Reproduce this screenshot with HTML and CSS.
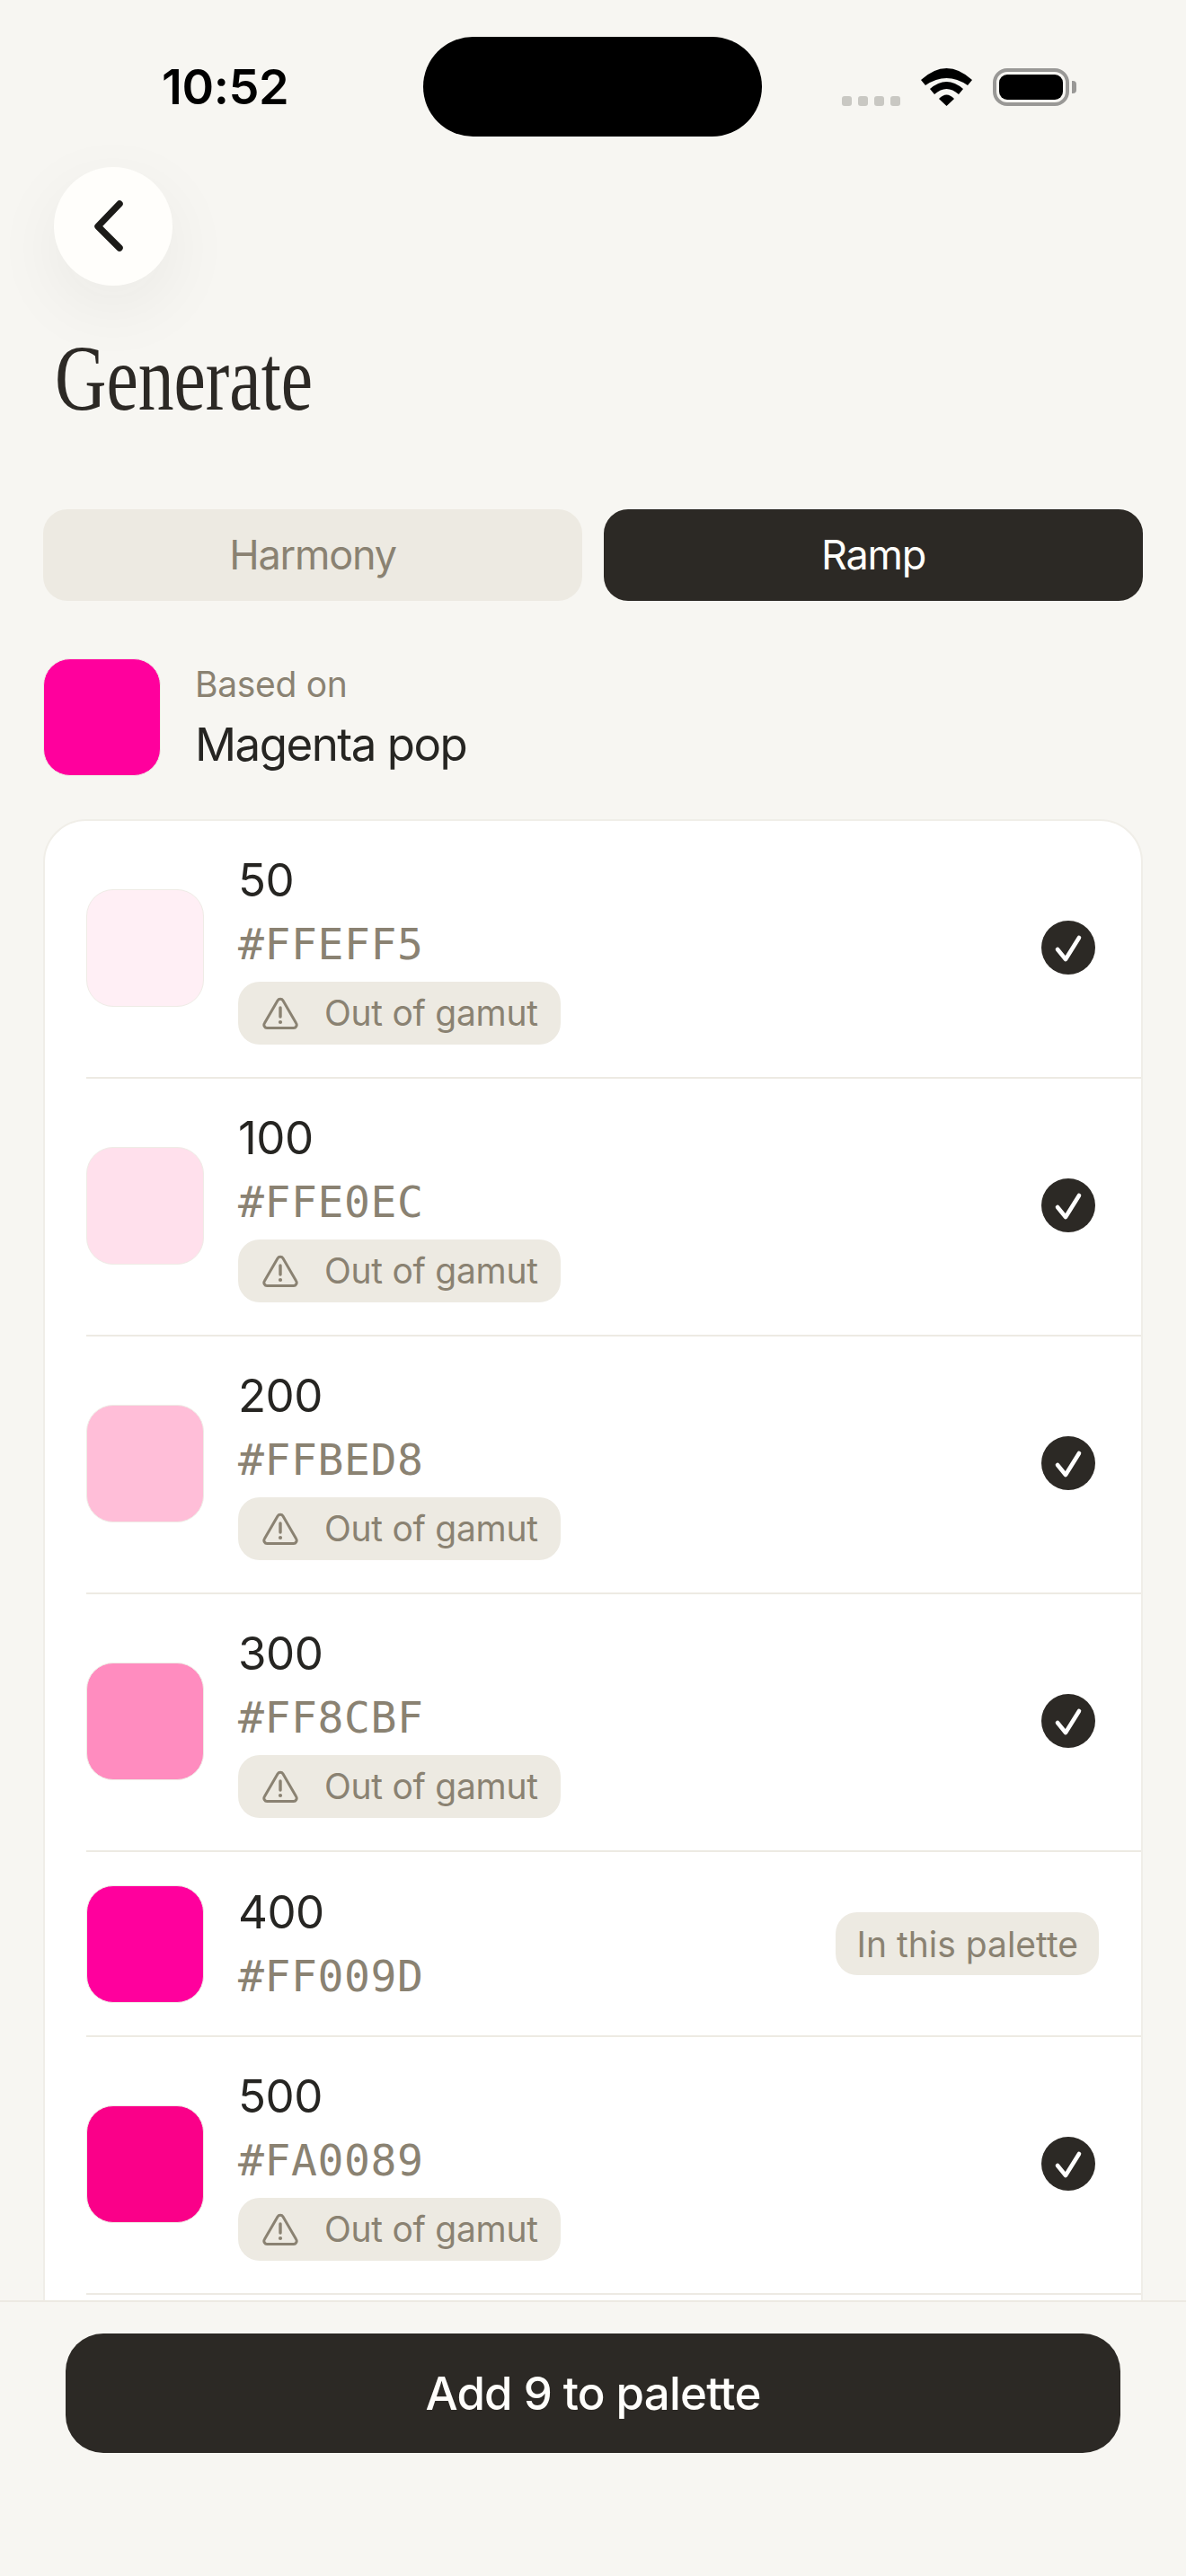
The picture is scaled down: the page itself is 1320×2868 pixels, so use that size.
FILE: index.html
```html
<!DOCTYPE html>
<html lang="en">

<head>
  <meta charset="UTF-8" />
  <meta name="viewport" content="width=device-width, initial-scale=1.0" />
  <title>Generate</title>
  <link rel="stylesheet" href="styles.css">
</head>

<body>
  <svg class="sprites" width="0" height="0">
    <symbol id="warn" viewBox="0 0 40 36">
      <path d="M17 4 a3.5 3.5 0 0 1 6 0 L37.5 29 a3.5 3.5 0 0 1 -3 5.5 H5.5 a3.5 3.5 0 0 1 -3 -5.5 Z" fill="none" stroke="#8a8272" stroke-width="3" stroke-linejoin="round" />
      <path d="M20 12 V22" fill="none" stroke="#8a8272" stroke-width="3.4" stroke-linecap="round" />
      <circle cx="20" cy="28" r="2.1" fill="#8a8272" />
    </symbol>
    <symbol id="check" viewBox="0 0 60 60">
      <circle cx="30" cy="30" r="30" fill="#2c2925" />
      <path d="M18 32 L27 43 L42 19" fill="none" stroke="#fff" stroke-width="4.6" stroke-linecap="round" stroke-linejoin="round" />
    </symbol>
  </svg>

  <div class="phone">
    <div class="status">
      <span class="time">10:52</span>
      <div class="island"></div>
      <div class="status-icons">
        <div class="signal"><i></i><i></i><i></i><i></i></div>
        <svg class="wifi" width="57" height="42" viewBox="0 0 57 42">
          <path d="M0 13 Q28.5 -13 57 13 L52 19 Q28.5 3 5 19 Z" />
          <path d="M10 23 Q28.5 7 47 23 L42 29 Q28.5 17 15 29 Z" />
          <path d="M20 34 Q28.5 25 37 34 L28.5 42 Z" />
        </svg>
        <div class="battery"><div class="battery-fill"></div></div>
        <div class="battery-cap"></div>
      </div>
    </div>

    <button class="back">
      <svg width="40" height="64" viewBox="0 0 40 64">
        <path d="M31 7 L7 32 L31 56" fill="none" stroke="#1c1b18" stroke-width="7.5" stroke-linecap="round" stroke-linejoin="round" />
      </svg>
    </button>

    <h1 class="title"><span>Generate</span></h1>

    <div class="tabs">
      <div class="tab">Harmony</div>
      <div class="tab active">Ramp</div>
    </div>

    <div class="based">
      <div class="swatch magenta"></div>
      <div>
        <div class="based-label">Based on</div>
        <div class="based-name">Magenta pop</div>
      </div>
    </div>

    <div class="scroller">
      <div class="card">
        <div class="row">
          <div class="swatch c50"></div>
          <div class="info">
            <div class="step">50</div>
            <div class="hex">#FFEFF5</div>
            <div class="pill"><svg class="warn"><use href="#warn" /></svg>Out of gamut</div>
          </div>
          <svg class="tick"><use href="#check" /></svg>
        </div>
        <div class="row">
          <div class="swatch c100"></div>
          <div class="info">
            <div class="step">100</div>
            <div class="hex">#FFE0EC</div>
            <div class="pill"><svg class="warn"><use href="#warn" /></svg>Out of gamut</div>
          </div>
          <svg class="tick"><use href="#check" /></svg>
        </div>
        <div class="row">
          <div class="swatch c200"></div>
          <div class="info">
            <div class="step">200</div>
            <div class="hex">#FFBED8</div>
            <div class="pill"><svg class="warn"><use href="#warn" /></svg>Out of gamut</div>
          </div>
          <svg class="tick"><use href="#check" /></svg>
        </div>
        <div class="row">
          <div class="swatch c300"></div>
          <div class="info">
            <div class="step">300</div>
            <div class="hex">#FF8CBF</div>
            <div class="pill"><svg class="warn"><use href="#warn" /></svg>Out of gamut</div>
          </div>
          <svg class="tick"><use href="#check" /></svg>
        </div>
        <div class="row short">
          <div class="swatch c400"></div>
          <div class="info">
            <div class="step">400</div>
            <div class="hex">#FF009D</div>
          </div>
          <div class="pill in-palette">In this palette</div>
        </div>
        <div class="row">
          <div class="swatch c500"></div>
          <div class="info">
            <div class="step">500</div>
            <div class="hex">#FA0089</div>
            <div class="pill"><svg class="warn"><use href="#warn" /></svg>Out of gamut</div>
          </div>
          <svg class="tick"><use href="#check" /></svg>
        </div>
      </div>
    </div>

    <div class="footer">
      <button class="add">Add 9 to palette</button>
    </div>
  </div>
</body>

</html>
```
FILE: styles.css
```css
* {
  box-sizing: border-box;
}

body {
  margin: 0;
  background-color: #f7f6f2;
  font-family: Inter, "Liberation Sans", sans-serif;
  color: #262522;
}

.sprites {
  display: block;
  height: 0;
}

.phone {
  display: flex;
  flex-direction: column;
  width: 1320px;
  height: 2868px;
  overflow: hidden;
}

/* status bar */
.status {
  display: flex;
  align-items: center;
  padding: 41px 0 0 180px;
  height: 152px;
  flex-shrink: 0;
}

.time {
  width: 291px;
  font-size: 54px;
  font-weight: 600;
  letter-spacing: -0.4px;
  color: #000;
}

.island {
  width: 377px;
  height: 111px;
  border-radius: 56px;
  background: #000;
}

.status-icons {
  display: flex;
  align-items: center;
  margin-left: 89px;
}

.signal {
  display: flex;
  gap: 7px;
  align-self: flex-end;
  margin-right: 23px;
}

.signal i {
  display: block;
  width: 11px;
  height: 11px;
  border-radius: 3px;
  background: #c9c8c3;
}

.wifi {
  display: block;
  margin-right: 23px;
}

.battery {
  width: 85px;
  height: 42px;
  padding: 3px;
  border: 4px solid #999896;
  border-radius: 16px;
}

.battery-fill {
  width: 100%;
  height: 100%;
  border-radius: 9px;
  background: #000;
}

.battery-cap {
  width: 5px;
  height: 14px;
  margin-left: 3px;
  border-radius: 0 4px 4px 0;
  background: #999896;
}

/* header */
.back {
  display: flex;
  align-items: center;
  justify-content: center;
  flex-shrink: 0;
  width: 132px;
  height: 132px;
  margin: 34px 0 0 60px;
  padding: 0 8px 0 0;
  border: none;
  border-radius: 50%;
  background: #fffefb;
  box-shadow: 0 24px 80px rgba(40, 38, 30, 0.06);
}

.title {
  margin: 43px 0 0 61px;
  font-family: "Liberation Serif", serif;
  font-size: 104px;
  font-weight: 400;
  line-height: 120px;
  color: #2c2925;
}

.title span {
  display: inline-block;
  transform: scaleX(0.765);
  transform-origin: left center;
}

.tabs {
  display: flex;
  gap: 24px;
  margin: 86px 48px 0;
  flex-shrink: 0;
}

.tab {
  flex: 1;
  height: 102px;
  border-radius: 27px;
  background: #edeae2;
  font-size: 45px;
  letter-spacing: -1.2px;
  line-height: 102px;
  text-align: center;
  color: #8a8272;
}

.tab.active {
  background: #2c2925;
  color: #fffefb;
}

.based {
  display: flex;
  align-items: center;
  gap: 38px;
  margin: 64px 48px 0;
  flex-shrink: 0;
}

.based-label {
  font-size: 39px;
  letter-spacing: -0.3px;
  line-height: 52px;
  color: #8a8272;
}

.based-name {
  margin-top: 8px;
  font-size: 51px;
  letter-spacing: -1.5px;
  line-height: 66px;
}

.swatch {
  flex-shrink: 0;
  width: 131px;
  height: 131px;
  border: 1px solid #efece6;
  border-radius: 30px;
}

.magenta, .c400 { background: #ff009d; }
.c50 { background: #ffeff5; }
.c100 { background: #ffe0ec; }
.c200 { background: #ffbed8; }
.c300 { background: #ff8cbf; }
.c500 { background: #fa0089; }

/* ramp list */
.scroller {
  flex: 1;
  min-height: 0;
  overflow: hidden;
  padding: 48px 48px 0;
}

.card {
  padding-bottom: 80px;
  border: 2px solid #f0eee8;
  border-radius: 48px;
  background: #fff;
}

.row {
  display: flex;
  align-items: center;
  gap: 38px;
  height: 287px;
  margin-left: 46px;
  padding-right: 47px;
  padding-bottom: 3px;
  border-bottom: 2px solid #edeae3;
}

.row.short {
  height: 206px;
  padding-bottom: 0;
}

.info {
  flex: 1;
}

.step {
  font-size: 51px;
  letter-spacing: -0.5px;
  line-height: 63px;
}

.hex {
  margin-top: 9px;
  font-family: "DejaVu Sans Mono", monospace;
  font-size: 48px;
  letter-spacing: 0.6px;
  line-height: 63px;
  color: #8a8272;
}

.pill {
  display: inline-flex;
  align-items: center;
  gap: 29px;
  height: 70px;
  margin-top: 10px;
  padding: 0 25px 0 27px;
  border-radius: 24px;
  background: #edeae2;
  font-size: 39px;
  letter-spacing: -0.3px;
  color: #8a8272;
}

.warn {
  width: 40px;
  height: 36px;
}

.pill.in-palette {
  margin-top: 0;
  padding: 0 23px;
  letter-spacing: 0;
}

.tick {
  width: 60px;
  height: 60px;
  margin-right: 4px;
}

/* bottom bar */
.footer {
  flex-shrink: 0;
  height: 307px;
  padding: 35px 73px 0;
  border-top: 2px solid #edeae3;
  background: #f7f6f2;
}

.add {
  display: block;
  width: 100%;
  height: 133px;
  border: none;
  border-radius: 42px;
  background: #2c2925;
  font-family: Inter, "Liberation Sans", sans-serif;
  font-size: 51px;
  font-weight: 500;
  letter-spacing: -0.8px;
  color: #fffefb;
}
```
